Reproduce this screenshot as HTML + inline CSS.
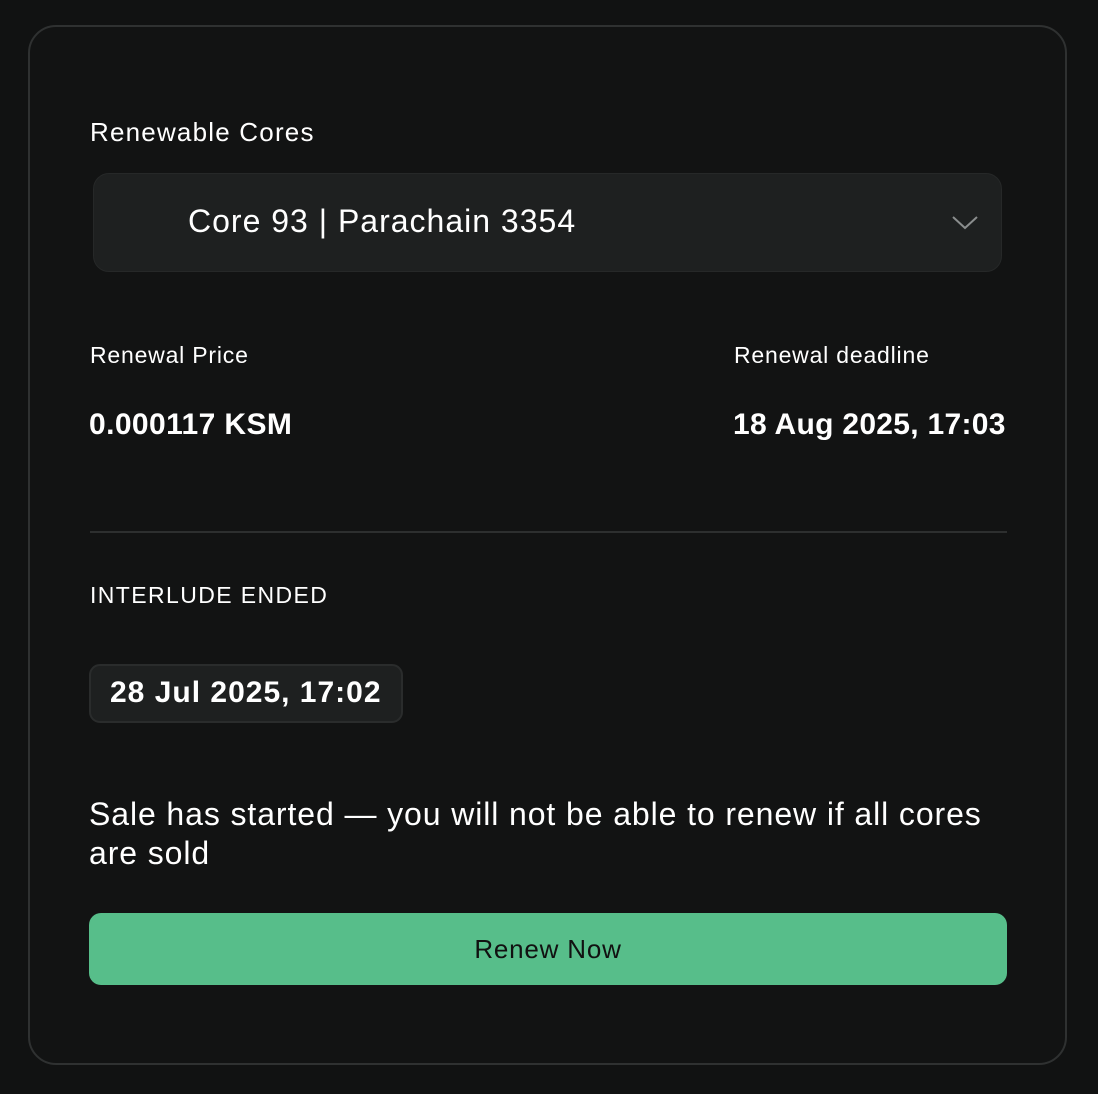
<!DOCTYPE html>
<html><head><style>
body{margin:0;width:1098px;height:1094px;background:#111212;font-family:"Liberation Sans",sans-serif;color:#fff;position:relative;overflow:hidden}
.card{position:absolute;left:28px;top:25px;width:1039px;height:1040px;border:2px solid #2f3131;border-radius:28px;box-sizing:border-box;background:#121313}
.a{position:absolute;white-space:nowrap}
</style></head><body>
<div class="card"></div>
<div class="a" style="left:90px;top:117px;font-size:26px;letter-spacing:1.2px">Renewable Cores</div>
<div class="a" style="left:93px;top:173px;width:909px;height:99px;background:#1e2020;border:1px solid #262828;border-radius:16px;box-sizing:border-box"></div>
<div class="a" style="left:188px;top:203px;font-size:32px;letter-spacing:1px">Core 93 <span style="font-weight:300">|</span> Parachain 3354</div>
<svg class="a" style="left:950px;top:212px" width="30" height="20"><path d="M3 5 L15 16 L27 5" stroke="#8a8d8d" stroke-width="2" fill="none"/></svg>
<div class="a" style="left:90px;top:342px;font-size:23px;letter-spacing:0.8px">Renewal Price</div>
<div class="a" style="left:734px;top:342px;font-size:23px;letter-spacing:0.8px">Renewal deadline</div>
<div class="a" style="left:89px;top:408px;font-size:30px;font-weight:bold;letter-spacing:0.4px">0.000117 KSM</div>
<div class="a" style="left:733px;top:408px;font-size:30px;font-weight:bold;letter-spacing:0.3px">18 Aug 2025, 17:03</div>
<div class="a" style="left:90px;top:531px;width:917px;height:2px;background:#2d2f2f"></div>
<div class="a" style="left:90px;top:582px;font-size:23px;letter-spacing:1.4px">INTERLUDE ENDED</div>
<div class="a" style="left:89px;top:664px;width:314px;height:59px;background:#1e2020;border:2px solid #2a2c2c;border-radius:11px;box-sizing:border-box"></div>
<div class="a" style="left:110px;top:676px;font-size:30px;font-weight:bold;letter-spacing:1px">28 Jul 2025, 17:02</div>
<div class="a" style="left:89px;top:795px;font-size:32px;line-height:39px;letter-spacing:0.9px">Sale has started — you will not be able to renew if all cores<br>are sold</div>
<div class="a" style="left:89px;top:913px;width:918px;height:72px;background:#57be8a;border-radius:12px;color:#111;font-size:26px;text-align:center;line-height:72px;letter-spacing:0.8px">Renew Now</div>
</body></html>
